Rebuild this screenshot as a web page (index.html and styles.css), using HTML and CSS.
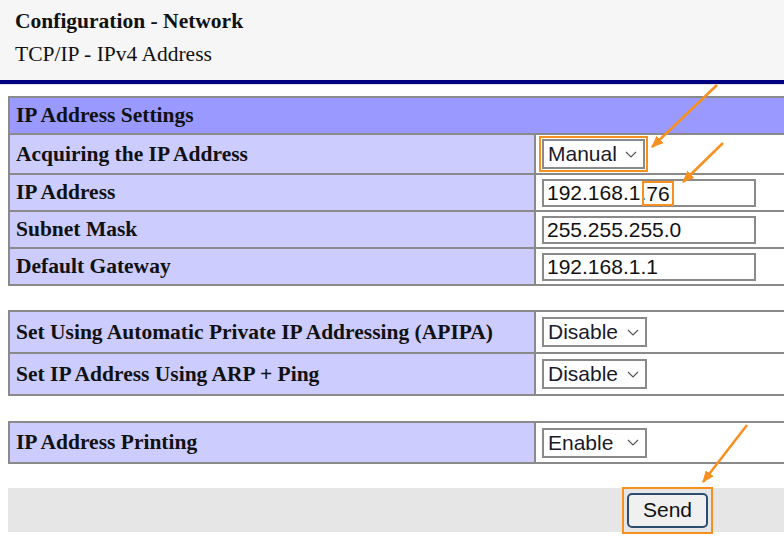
FILE: index.html
```html
<!DOCTYPE html>
<html lang="en">
<head>
<meta charset="utf-8">
<title>Configuration - Network</title>
<link rel="stylesheet" href="styles.css">
</head>
<body>
<div class="page">
  <header class="head">
    <div class="title">Configuration - Network</div>
    <div class="sub">TCP/IP - IPv4 Address</div>
  </header>
  <main class="content">
    <table class="grid t1">
      <tr class="row-h"><th colspan="2">IP Address Settings</th></tr>
      <tr class="row-acq">
        <td class="lab">Acquiring the IP Address</td>
        <td class="val"><span class="mark sel-mark"><span class="sel"><span>Manual</span><svg class="chev" width="12" height="7" viewBox="0 0 12 7"><path d="M1 1 L6 6 L11 1" fill="none" stroke="#555" stroke-width="1.2"/></svg></span></span></td>
      </tr>
      <tr class="row">
        <td class="lab">IP Address</td>
        <td class="val"><span class="inp">192.168.1.<span class="hl">76</span></span></td>
      </tr>
      <tr class="row">
        <td class="lab">Subnet Mask</td>
        <td class="val"><span class="inp">255.255.255.0</span></td>
      </tr>
      <tr class="row">
        <td class="lab">Default Gateway</td>
        <td class="val"><span class="inp">192.168.1.1</span></td>
      </tr>
    </table>

    <table class="grid t2">
      <tr class="row-l">
        <td class="lab">Set Using Automatic Private IP Addressing (APIPA)</td>
        <td class="val"><span class="sel"><span>Disable</span><svg class="chev" width="12" height="7" viewBox="0 0 12 7"><path d="M1 1 L6 6 L11 1" fill="none" stroke="#555" stroke-width="1.2"/></svg></span></td>
      </tr>
      <tr class="row-l">
        <td class="lab">Set IP Address Using ARP + Ping</td>
        <td class="val"><span class="sel"><span>Disable</span><svg class="chev" width="12" height="7" viewBox="0 0 12 7"><path d="M1 1 L6 6 L11 1" fill="none" stroke="#555" stroke-width="1.2"/></svg></span></td>
      </tr>
    </table>

    <table class="grid t3">
      <tr class="row-p">
        <td class="lab">IP Address Printing</td>
        <td class="val"><span class="sel"><span>Enable</span><svg class="chev" width="12" height="7" viewBox="0 0 12 7"><path d="M1 1 L6 6 L11 1" fill="none" stroke="#555" stroke-width="1.2"/></svg></span></td>
      </tr>
    </table>

    <div class="bar">
      <div class="bar-spacer"></div>
      <div class="bar-cell"><span class="mark btn-mark"><button class="send" type="button">Send</button></span></div>
    </div>
  </main>

  <svg class="annot" width="784" height="550" viewBox="0 0 784 550">
    <defs>
      <marker id="ah" viewBox="0 0 12 10" refX="11" refY="5" markerWidth="12" markerHeight="10" markerUnits="userSpaceOnUse" orient="auto">
        <path d="M0 0 L12 5 L0 10 z" fill="#f7901e"/>
      </marker>
    </defs>
    <line x1="717" y1="85" x2="652" y2="147" stroke="#f7901e" stroke-width="2.5" marker-end="url(#ah)"/>
    <line x1="723" y1="143" x2="683" y2="182" stroke="#f7901e" stroke-width="2.5" marker-end="url(#ah)"/>
    <line x1="747" y1="425" x2="703" y2="482" stroke="#f7901e" stroke-width="2.5" marker-end="url(#ah)"/>
  </svg>
</div>
</body>
</html>
```

FILE: styles.css
```css
html, body {
  margin: 0;
  padding: 0;
  overflow: hidden;
  background: #fff;
}

.page {
  position: relative;
  width: 784px;
  height: 550px;
  overflow: hidden;
}

.head {
  height: 84px;
  box-sizing: border-box;
  background: #f6f6f6;
  border-bottom: 4px solid #000080;
  box-shadow: 0 1px 0 #e2e2e2;
  padding: 8px 0 0 15px;
  font-family: "Liberation Serif", "Times New Roman", serif;
  font-size: 21.5px;
  color: #111;
}

.title {
  font-weight: bold;
  line-height: 26px;
}

.sub {
  line-height: 26px;
  margin-top: 7px;
}

.content {
  padding: 12px 0 0 8px;
}

.grid {
  width: 791px;
  border-collapse: separate;
  border-spacing: 0;
  border-top: 2px solid #8a8a8a;
  border-left: 2px solid #8a8a8a;
  font-family: "Liberation Serif", "Times New Roman", serif;
  font-size: 21.5px;
  font-weight: bold;
  color: #111;
}

.grid th,
.grid td {
  border-right: 2px solid #8a8a8a;
  border-bottom: 2px solid #8a8a8a;
  padding: 0 6px;
  vertical-align: middle;
  text-align: left;
}

.grid th {
  background: #9999ff;
  height: 35px;
}

.grid td.lab {
  width: 512px;
  background: #ccccff;
}

.grid td.val {
  background: #fff;
  font-weight: normal;
}

.row-acq td { height: 38px; }
.row td { height: 35px; }
.row-l td { height: 40px; }
.row-p td { height: 39px; }

.t2 { margin-top: 24px; }
.t3 { margin-top: 25px; }

.sel {
  display: inline-flex;
  align-items: center;
  box-sizing: border-box;
  width: 105px;
  height: 30px;
  border: 2px solid #8a8a8a;
  padding-left: 4px;
  font-family: "Liberation Sans", Arial, sans-serif;
  font-size: 21px;
  color: #1a1a2a;
  background: #fff;
  vertical-align: middle;
}

.chev {
  margin-left: auto;
  margin-right: 6px;
}

.mark {
  display: inline-block;
  border: 2px solid #f7901e;
  vertical-align: middle;
}

.sel-mark {
  padding: 1px;
  margin-left: -3px;
}

.sel-mark .sel {
  width: 103px;
  height: 30px;
  display: flex;
}

.inp {
  display: inline-block;
  box-sizing: border-box;
  width: 214px;
  height: 28px;
  border: 2px solid #8a8a8a;
  padding-left: 3px;
  font-family: "Liberation Sans", Arial, sans-serif;
  font-size: 21px;
  line-height: 24px;
  color: #111;
  vertical-align: middle;
}

.hl {
  display: inline-block;
  border: 2px solid #f7901e;
  padding: 0 2px;
  margin: 0 -4px;
  line-height: 21px;
  vertical-align: top;
}

.bar {
  display: flex;
  align-items: center;
  width: 791px;
  height: 44px;
  margin-top: 24px;
  background: #e6e6e6;
}

.bar-spacer {
  width: 528px;
  flex: none;
}

.bar-cell {
  flex: 1;
  display: flex;
  justify-content: center;
}

.btn-mark {
  padding: 4px 3px;
}

.send {
  display: block;
  box-sizing: border-box;
  width: 81px;
  height: 35px;
  margin: 0;
  border: 2px solid #2d4d6e;
  border-radius: 5px;
  background: #f0f0f0;
  font-family: "Liberation Sans", Arial, sans-serif;
  font-size: 21px;
  color: #111;
  padding: 0;
}

.annot {
  position: absolute;
  top: 0;
  left: 0;
  pointer-events: none;
}
```
